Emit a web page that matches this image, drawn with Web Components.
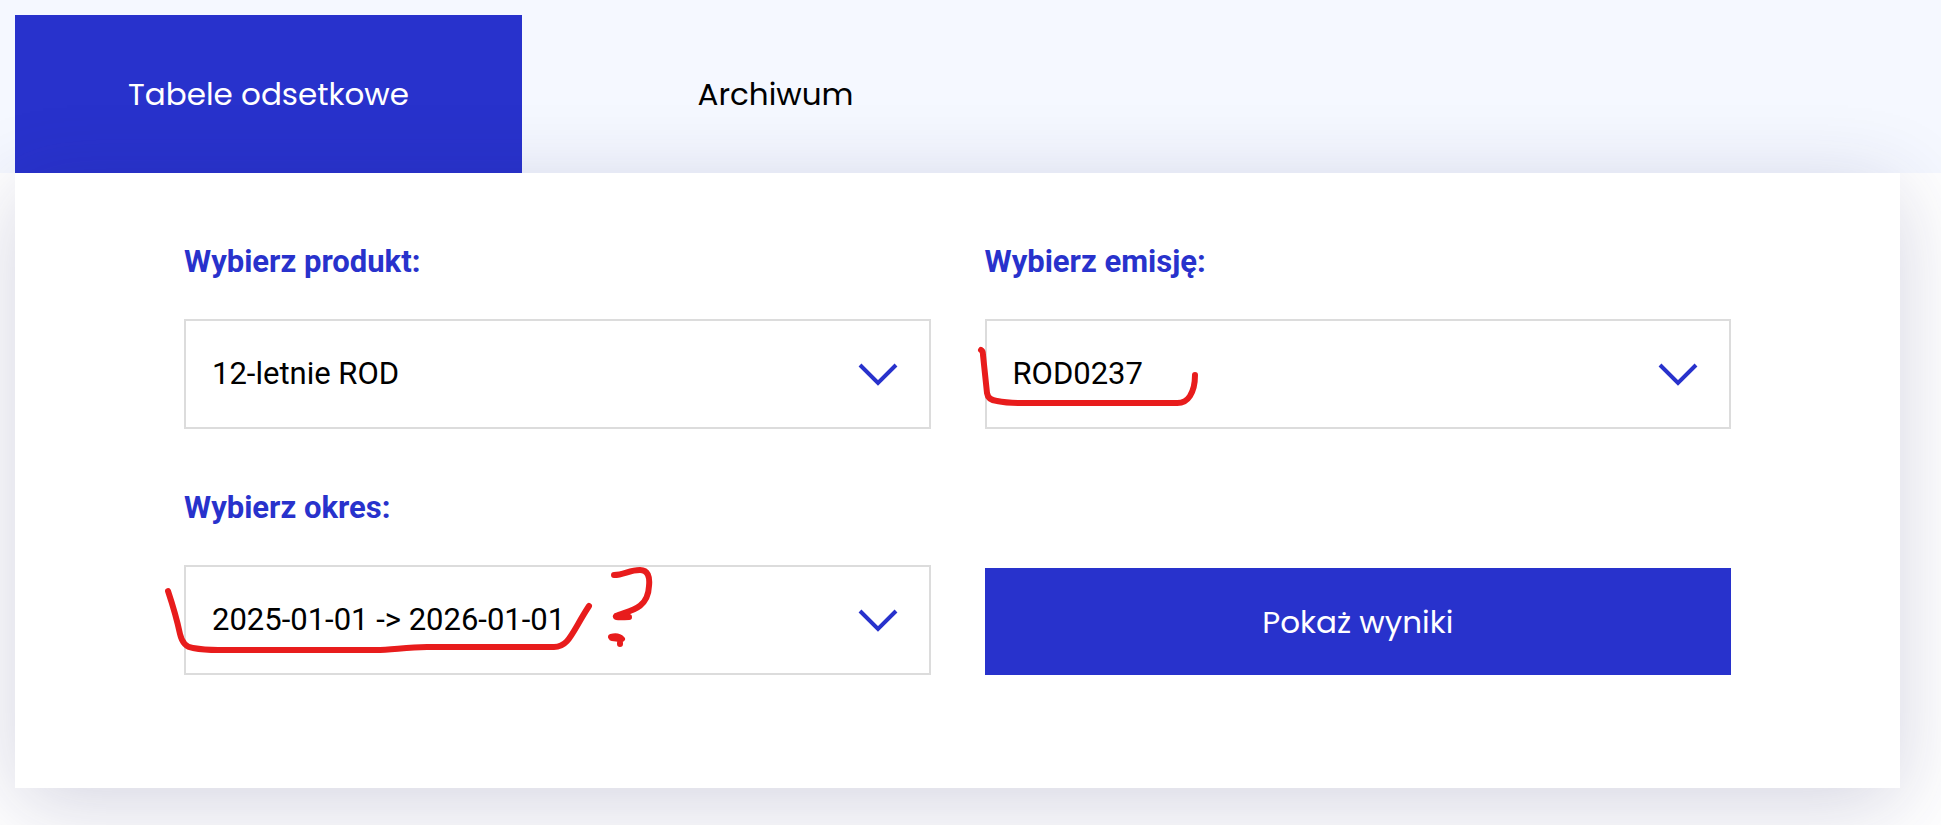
<!DOCTYPE html>
<html lang="pl">
<head>
<meta charset="utf-8">
<meta name="viewport" content="width=device-width, initial-scale=1">
<title>Tabele odsetkowe</title>
<style>
  body {
    margin: 0;
    background: #fff;
    overflow-x: hidden;
    font-family: Roboto, sans-serif;
    --brand: #2832cc;
    --line: #dcdcdc;
    --heading-font: Poppins, Inter, sans-serif;
    --mark: #e81c1c;
  }
</style>
</head>
<body>
<interest-page>
  <tab-bar slot="tabs">
    <tab-item selected>Tabele odsetkowe</tab-item>
    <tab-item>Archiwum</tab-item>
  </tab-bar>
  <filter-panel>
    <select-field label="Wybierz produkt:" value="12-letnie ROD"></select-field>
    <select-field label="Wybierz emisję:" value="ROD0237">
      <pen-mark strokes="M-4 31 Q-2 32 -2 36 L2 74 Q3 81 12 82 Q22 84 37 84 H190 Q200 85 205 77 Q210 69 210 56"></pen-mark>
    </select-field>
    <select-field label="Wybierz okres:" value="2025-01-01 -&gt; 2026-01-01">
      <pen-mark strokes="M-16 26 Q-8 50 -4 69 Q-1 82 9 83 Q20 85 34 85 H192 C208 85 222 82 243 82 H370 C385 82 388 67 405 41 M430 10 C440 10 445 5 456 5 C464 5 466 12 465 21 C464 46 442 46 432 51 Q430 53 445 52 M427 72 Q434 70 438 74 M428 73 L436 74 M436 78 L436 79"></pen-mark>
    </select-field>
    <submit-button>Pokaż wyniki</submit-button>
  </filter-panel>
</interest-page>

<script>
  const define = (name, html, setup) => {
    const template = document.createElement('template');
    template.innerHTML = html;
    customElements.define(name, class extends HTMLElement {
      constructor() {
        super();
        this.attachShadow({ mode: 'open' }).append(template.content.cloneNode(true));
      }
      connectedCallback() {
        if (setup) setup(this, this.shadowRoot);
      }
    });
  };

  define('interest-page', `
    <style>
      :host { display: block; }
      header { background: #f5f8ff; padding: 15px 41px 0 15px; }
      main { padding: 0 41px 37px 15px; }
    </style>
    <header><slot name="tabs"></slot></header>
    <main><slot></slot></main>`);

  define('tab-bar', `
    <style>
      :host { display: block; }
      nav { display: flex; }
    </style>
    <nav role="tablist"><slot></slot></nav>`);

  define('tab-item', `
    <style>
      :host { display: block; flex: 0 1 507px; }
      button {
        width: 100%; height: 158px; padding: 0; border: 0;
        background: transparent; color: #000;
        font: 400 31px/48px var(--heading-font); cursor: pointer;
      }
      button[aria-selected="true"] { background: var(--brand); color: #fff; }
    </style>
    <button type="button" role="tab"><slot></slot></button>`,
    (host, root) => root.querySelector('button')
      .setAttribute('aria-selected', host.hasAttribute('selected')));

  define('filter-panel', `
    <style>
      :host { display: block; position: relative; }
      form {
        display: grid; grid-template-columns: 1fr 1fr; gap: 59px 54px;
        align-items: end; padding: 69px 169px 113px;
        background: #fff; box-shadow: 0 16px 80px rgba(40, 40, 105, .2);
      }
    </style>
    <form><slot></slot></form>`);

  define('select-field', `
    <style>
      :host { display: block; }
      label {
        display: block; margin-bottom: 37px; color: var(--brand);
        font-size: 31px; line-height: 40px; font-weight: 700;
      }
      .box { position: relative; display: grid; align-items: center; }
      select, .chevron { grid-area: 1 / 1; }
      select {
        appearance: none; box-sizing: border-box; width: 100%; height: 110px;
        margin: 0; padding: 0 80px 0 26px; border: 2px solid var(--line);
        border-radius: 0; background: #fff; color: #000;
        font: 400 31px/40px Roboto, sans-serif;
      }
      .chevron {
        justify-self: end; margin-right: 33px; pointer-events: none;
        fill: none; stroke: var(--brand); stroke-width: 4;
      }
    </style>
    <label for="field"></label>
    <div class="box">
      <select id="field"><option></option></select>
      <svg class="chevron" width="40" height="24" viewBox="0 0 40 24" aria-hidden="true"><path d="M2 3 20 21 38 3"/></svg>
      <slot></slot>
    </div>`,
    (host, root) => {
      root.querySelector('label').textContent = host.getAttribute('label');
      root.querySelector('option').textContent = host.getAttribute('value');
    });

  /* Freehand pen strokes laid over the field they annotate. */
  define('pen-mark', `
    <style>
      :host { position: absolute; top: 0; left: 0; pointer-events: none; }
      svg {
        display: block; overflow: visible; fill: none; stroke: var(--mark);
        stroke-width: 6; stroke-linecap: round; stroke-linejoin: round;
      }
    </style>
    <svg width="1" height="1" aria-hidden="true"><path/></svg>`,
    (host, root) => root.querySelector('path').setAttribute('d', host.getAttribute('strokes')));

  define('submit-button', `
    <style>
      :host { display: block; }
      button {
        display: block; width: 100%; height: 107px; padding: 0; border: 0;
        background: var(--brand); color: #fff;
        font: 400 31px/48px var(--heading-font); cursor: pointer;
      }
    </style>
    <button type="button"><slot></slot></button>`);
</script>
</body>
</html>
